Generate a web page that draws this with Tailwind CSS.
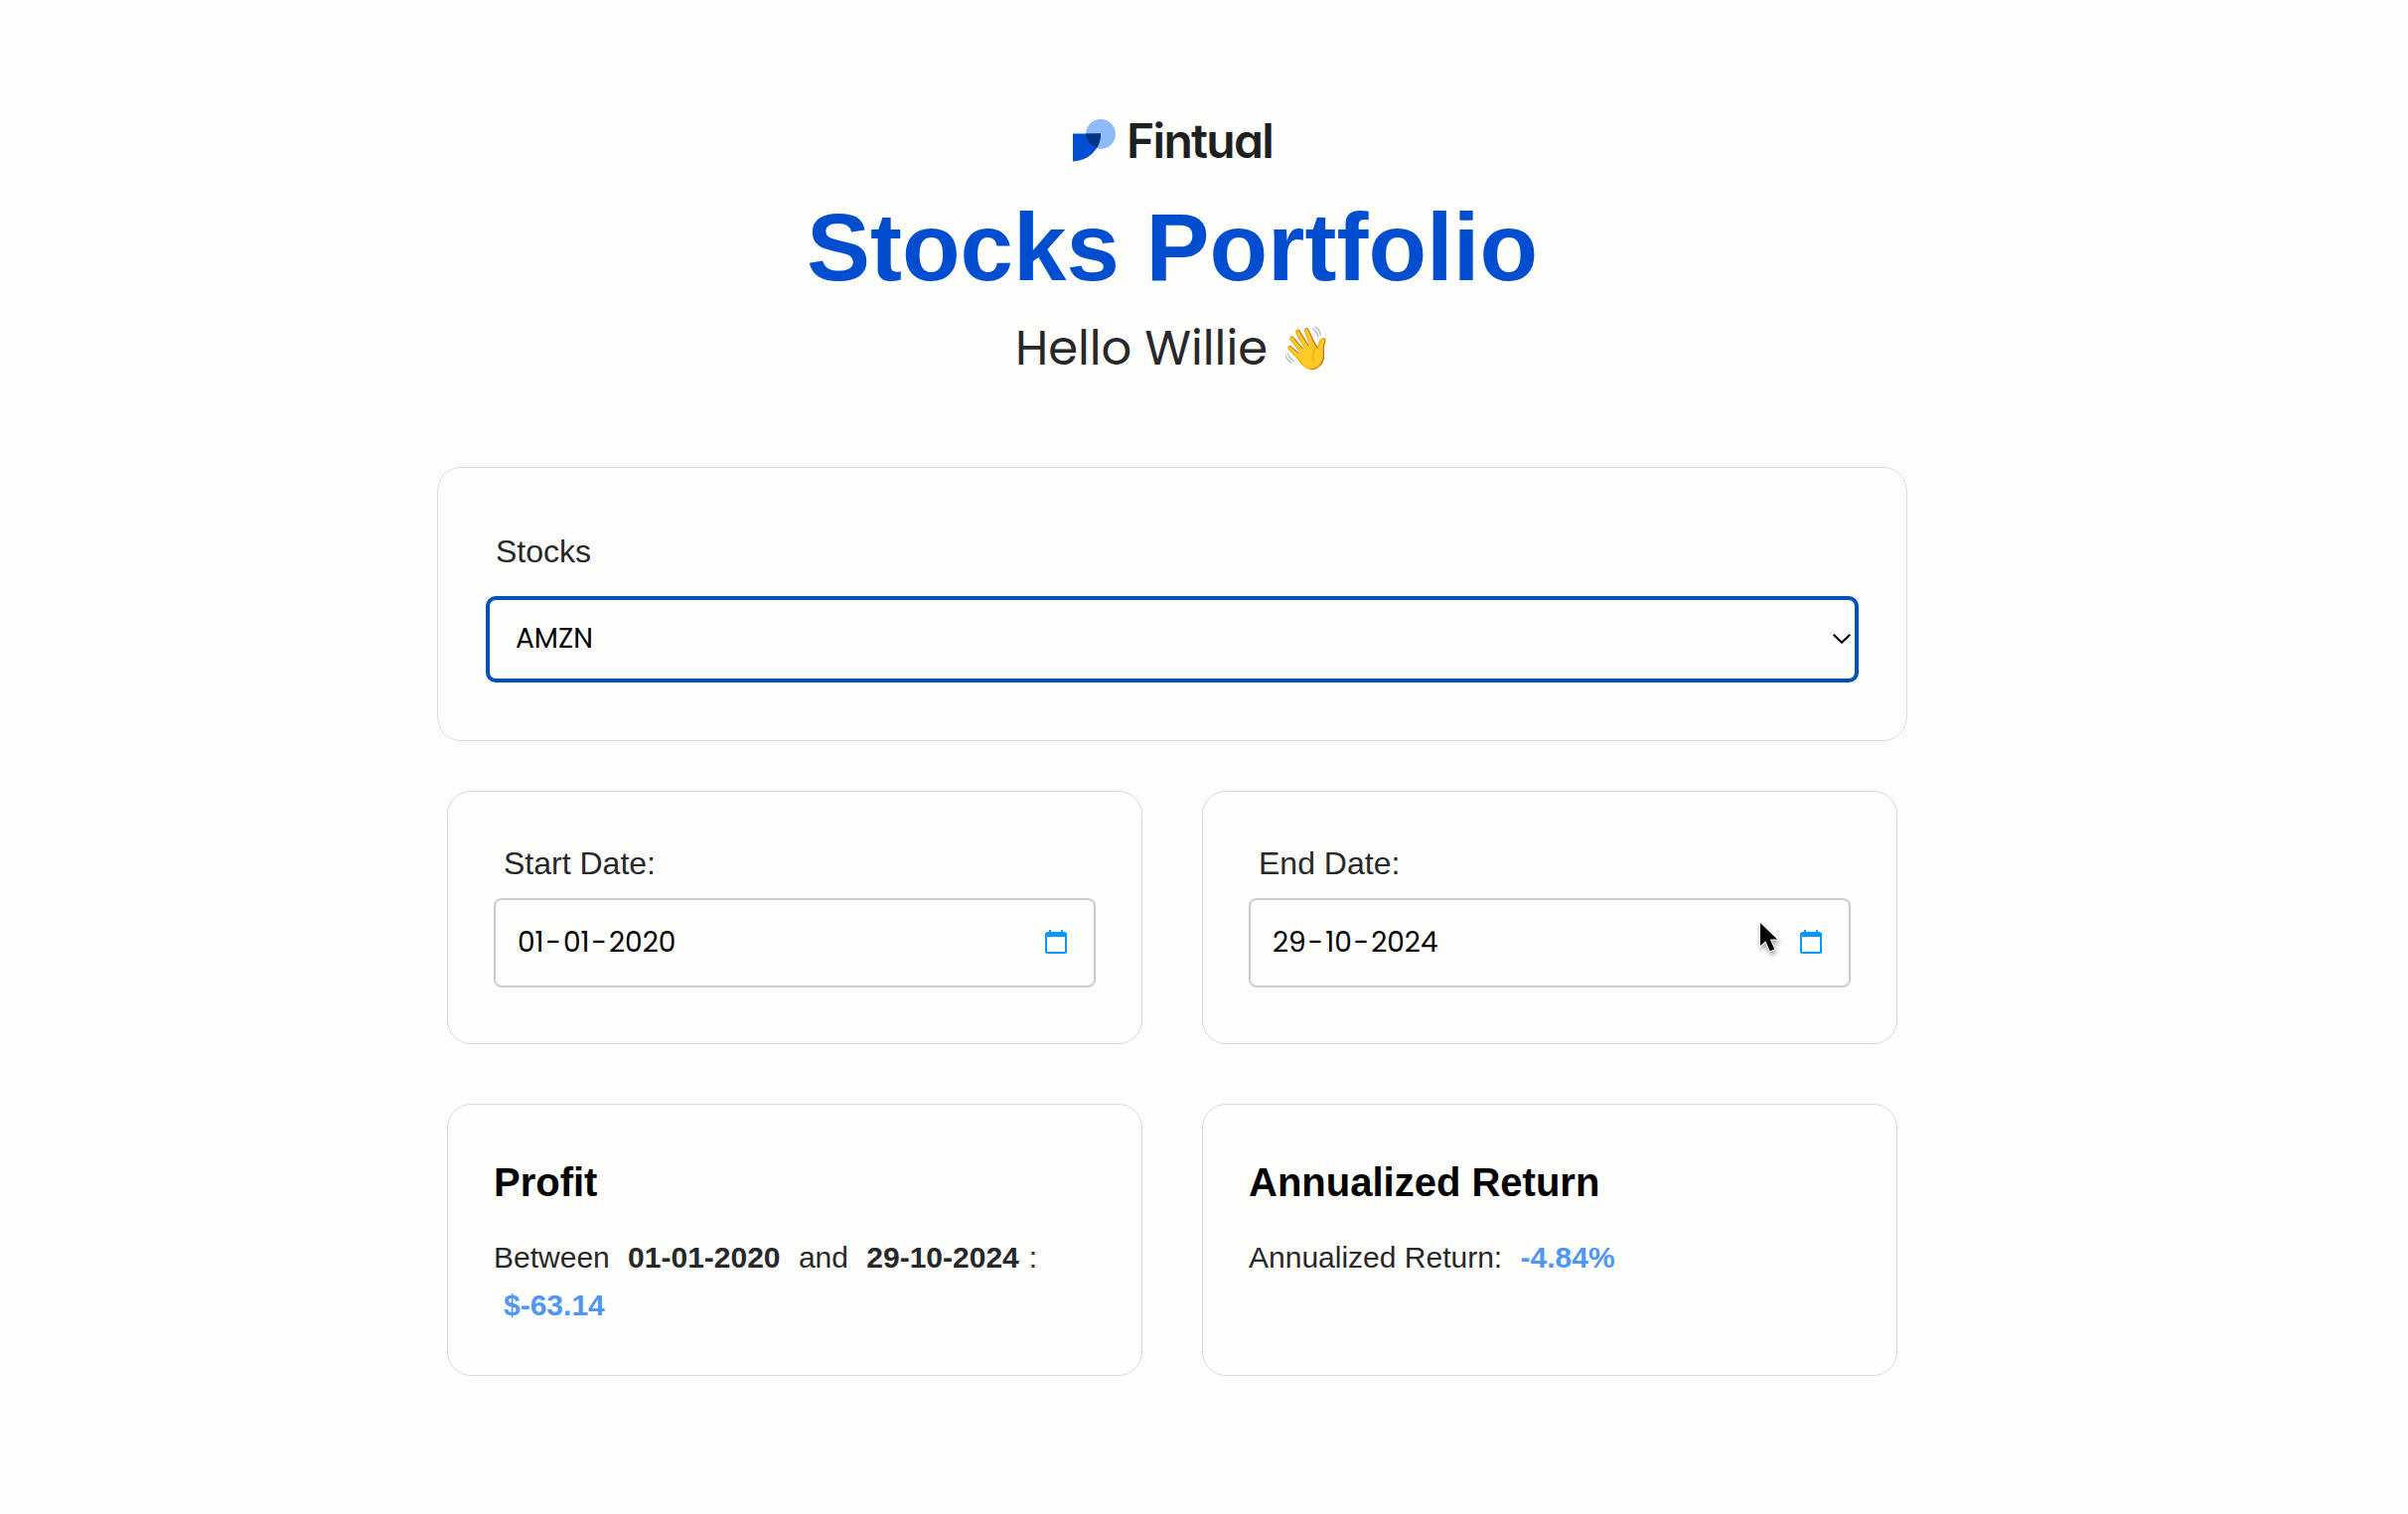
<!DOCTYPE html>
<html lang="en">
<head>
<meta charset="utf-8">
<title>Stocks Portfolio</title>
<script src="https://cdn.jsdelivr.net/npm/@tailwindcss/browser@4"></script>
</head>
<body class="min-h-[1524px] bg-[#fdfdfc] font-['Liberation_Sans',Arial,sans-serif] text-[#28282a]">
<main class="ml-[440px] w-[1480px] pt-[112px]">

  <header class="flex flex-col items-center">
    <div class="flex h-[60px] w-[202px] items-center">
      <svg class="h-[46px] w-[46px] shrink-0" viewBox="0 0 46 46">
        <circle cx="29" cy="16" r="15" fill="#8fbafa"/>
        <path d="M1 15.500H29A28 28 0 0 1 1 43.500Z" fill="#004fd2"/>
        <path d="M14 15.500H29A28 28 0 0 1 25.500 29.400A15 15 0 0 1 14 15.500Z" fill="#003483"/>
      </svg>
      <span class="ml-[9px] font-['Inter',sans-serif] text-[48px] leading-[60px] font-semibold tracking-[-1.700px] text-[#1f1f1f] [font-feature-settings:'cv11']">Fintual</span>
    </div>
    <h1 class="mt-[29px] text-[96px] leading-[96px] font-bold text-[#004ed0]">Stocks Portfolio</h1>
    <p class="mt-[18px] flex h-[72px] items-center pl-[3px] font-['Poppins','Inter',sans-serif] text-[48px] leading-[72px]">Hello Willie<span class="ml-[13px] flex w-[52px] justify-center text-[42px]">👋</span></p>
  </header>

  <section class="mt-[83px] h-[276px] rounded-[24px] border border-[#dcdce2] px-[48px] pt-[60px]">
    <label class="ml-[10px] block text-[32px] leading-[48px]">Stocks</label>
    <div class="mt-[21px] flex h-[87px] items-center justify-between rounded-[10px] border-4 border-[#0051bc] pr-[3px] pl-[26px] text-black">
      <span class="pb-[1px] font-['Poppins','Inter',sans-serif] text-[28px] leading-[42px]">AMZN</span>
      <svg class="mb-[1px] h-[12px] w-[20px]" viewBox="0 0 20 12" fill="none" stroke="#000" stroke-width="2.200"><path d="M1.700 1.700L10 9.800L18.300 1.700"/></svg>
    </div>
  </section>

  <div class="mt-[50px] grid grid-cols-2 gap-[60px] px-[10px]">
    <section class="h-[255px] rounded-[24px] border border-[#d9d9dd] px-[46px] pt-[48px]">
      <label class="ml-[10px] block text-[32px] leading-[48px]">Start Date:</label>
      <div class="mt-[11px] flex h-[90px] items-center rounded-[8px] border-2 border-[#cdcdd1] pr-[26px] pl-[20px] font-['Poppins','Inter',sans-serif] text-[28px] leading-[44px] text-black">
        <div class="flex pb-[1px]"><span class="px-[2px]">01</span><span>-</span><span class="px-[2px]">01</span><span>-</span><span class="px-[2px]">2020</span></div>
        <svg class="mb-[3px] ml-auto h-[25px] w-[24px]" viewBox="0 0 24 25"><path fill="#0a98fb" fill-rule="evenodd" d="M5 1H7V3H17V1H19V3H20.500A2.500 2.500 0 0 1 23 5.500V22.500A2.500 2.500 0 0 1 20.500 25H3.500A2.500 2.500 0 0 1 1 22.500V5.500A2.500 2.500 0 0 1 3.500 3H5ZM3 8V23H21V8Z"/></svg>
      </div>
    </section>
    <section class="h-[255px] rounded-[24px] border border-[#d9d9dd] px-[46px] pt-[48px]">
      <label class="ml-[10px] block text-[32px] leading-[48px]">End Date:</label>
      <div class="relative mt-[11px] flex h-[90px] items-center rounded-[8px] border-2 border-[#cdcdd1] pr-[26px] pl-[20px] font-['Poppins','Inter',sans-serif] text-[28px] leading-[44px] text-black">
        <div class="flex pb-[1px]"><span class="px-[2px]">29</span><span>-</span><span class="px-[2px]">10</span><span>-</span><span class="px-[2px]">2024</span></div>
        <svg class="mb-[3px] ml-auto h-[25px] w-[24px]" viewBox="0 0 24 25"><path fill="#0a98fb" fill-rule="evenodd" d="M5 1H7V3H17V1H19V3H20.500A2.500 2.500 0 0 1 23 5.500V22.500A2.500 2.500 0 0 1 20.500 25H3.500A2.500 2.500 0 0 1 1 22.500V5.500A2.500 2.500 0 0 1 3.500 3H5ZM3 8V23H21V8Z"/></svg>
        <svg class="absolute top-[19px] left-[509px] h-[38px] w-[26px] drop-shadow-[1px_3px_2px_rgba(0,0,0,0.35)]" viewBox="0 0 26 38"><path d="M4 4V27L9.300 22.200L13.800 32.300L18.200 30.400L13.900 20.600H21Z" fill="#000" stroke="#fff" stroke-width="2" paint-order="stroke"/></svg>
      </div>
    </section>
  </div>

  <div class="mt-[60px] grid grid-cols-2 gap-[60px] px-[10px]">
    <section class="h-[274px] rounded-[24px] border border-[#d9d9dd] px-[46px] pt-[54px]">
      <h2 class="text-[40px] leading-[48px] font-bold text-black">Profit</h2>
      <p class="mt-[28px] text-[30px] leading-[48px]">Between <b class="mx-[10px]">01-01-2020</b> and <b class="mx-[10px]">29-10-2024</b>:<br><b class="ml-[10px] text-[#5096f5]">$-63.14</b></p>
    </section>
    <section class="h-[274px] rounded-[24px] border border-[#d9d9dd] px-[46px] pt-[54px]">
      <h2 class="text-[40px] leading-[48px] font-bold text-black">Annualized Return</h2>
      <p class="mt-[28px] text-[30px] leading-[48px]">Annualized Return: <b class="ml-[10px] text-[#5096f5]">-4.84%</b></p>
    </section>
  </div>
</main>
</body>
</html>
